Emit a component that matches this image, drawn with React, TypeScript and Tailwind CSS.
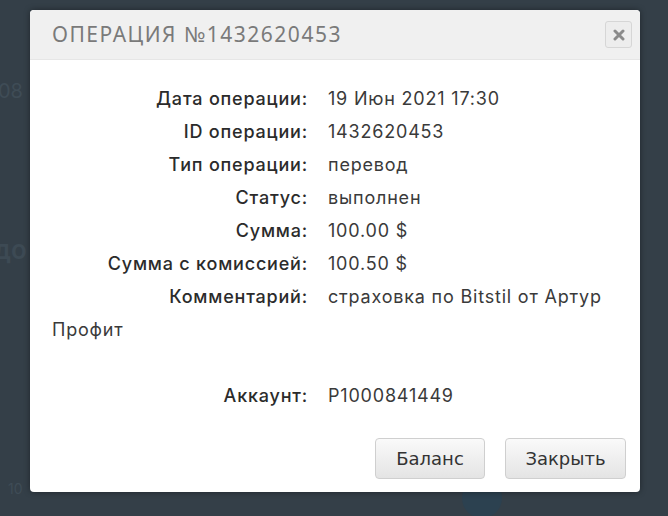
import React from 'react';

const rows = [
  { label: 'Дата операции:', value: '19 Июн 2021 17:30' },
  { label: 'ID операции:', value: '1432620453' },
  { label: 'Тип операции:', value: 'перевод' },
  { label: 'Статус:', value: 'выполнен' },
  { label: 'Сумма:', value: '100.00 $' },
  { label: 'Сумма с комиссией:', value: '100.50 $' },
  { label: 'Комментарий:', value: 'страховка по Bitstil от Артур Профит' },
];

function Row({ label, value }: { label: string; value: string }) {
  return (
    <div>
      <span className="inline-block w-[256px] mr-[20px] text-right font-medium text-[#2b2b2b]">{label}</span>
      <span className="text-[#3a3a3a]">{value}</span>
    </div>
  );
}

export default function App() {
  return (
    <div className="relative w-[668px] h-[516px] overflow-hidden bg-[#343f48] font-['Inter',sans-serif]">
      {/* faded page behind the dialog */}
      <div className="absolute left-[-2px] top-[76px] text-[20px] text-[#3f4c56]">08</div>
      <div className="absolute left-[-6px] top-[230px] text-[26px] font-semibold text-[#3d4a54]">до</div>
      <div className="absolute left-[8px] top-[478px] text-[14px] text-[#3f4c56]">10</div>
      <div className="absolute left-[462px] top-[478px] w-[40px] h-[40px] rounded-full bg-[#2c4150]" />

      <div className="absolute left-[30px] top-[10px] w-[610px] h-[482px] rounded-[4px] bg-white overflow-hidden flex flex-col shadow-[0_0_6px_rgba(0,0,0,0.4)]">
        <div className="h-[50px] shrink-0 bg-[#f0f0f0] border-b border-[#e6e6e6] flex items-center justify-between pl-[22px] pr-[8px]">
          <span className="font-['Noto_Sans',sans-serif] text-[21px] tracking-[1.5px] text-[#7a7a7a]">ОПЕРАЦИЯ №1432620453</span>
          <button className="w-[27px] h-[27px] rounded-[3px] border border-[#d6d6d6] bg-[#ededed] flex items-center justify-center">
            <svg width="12" height="12" viewBox="0 0 12 12">
              <path d="M2 2L10 10M10 2L2 10" stroke="#8a8a8a" strokeWidth="3" strokeLinecap="round" />
            </svg>
          </button>
        </div>

        <div className="flex-1 px-[22px] pt-[22px] text-[18px] tracking-[0.8px] leading-[33px] text-[#333]">
          {rows.map((r) => (
            <Row key={r.label} label={r.label} value={r.value} />
          ))}
          <div className="mt-[33px]">
            <Row label="Аккаунт:" value="P1000841449" />
          </div>
        </div>

        <div className="flex justify-end gap-[20px] pr-[14px] pb-[13px] font-['DejaVu_Sans',sans-serif] text-[18px] text-[#333]">
          <button className="w-[110px] h-[41px] rounded-[4px] border border-[#cfcfcf] bg-gradient-to-b from-[#fafafa] to-[#e4e4e4]">Баланс</button>
          <button className="w-[121px] h-[41px] rounded-[4px] border border-[#cfcfcf] bg-gradient-to-b from-[#fafafa] to-[#e4e4e4]">Закрыть</button>
        </div>
      </div>
    </div>
  );
}
